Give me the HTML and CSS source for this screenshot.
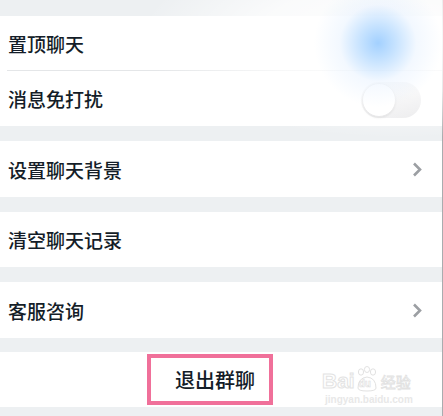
FILE: index.html
```html
<!DOCTYPE html>
<html lang="zh-CN">
<head>
<meta charset="utf-8">
<title>聊天设置</title>
<link rel="stylesheet" href="styles.css">
</head>
<body>
<div class="page">
  <section class="group">
    <div class="row row-54">置顶聊天</div>
    <div class="divider"></div>
    <div class="row row-55">消息免打扰
      <span class="switch"><span class="knob"></span></span>
    </div>
  </section>
  <section class="group">
    <div class="row row-56">设置聊天背景
      <svg class="chev" width="10" height="15" viewBox="0 0 10 15"><polyline points="2,1.5 8,7.5 2,13.5" fill="none" stroke="#9c9fa3" stroke-width="2.6"/></svg>
    </div>
  </section>
  <section class="group">
    <div class="row row-55">清空聊天记录</div>
  </section>
  <section class="group">
    <div class="row row-56">客服咨询
      <svg class="chev" width="10" height="15" viewBox="0 0 10 15"><polyline points="2,1.5 8,7.5 2,13.5" fill="none" stroke="#9c9fa3" stroke-width="2.6"/></svg>
    </div>
  </section>
  <section class="group group-last">
    <div class="row row-55 row-exit">
      <span class="exit-box">退出群聊</span>
    </div>
  </section>

  <div class="fog"></div>

  <div class="wm">
    <div class="wm-top">
      <span class="wm-bai">Bai</span>
      <svg class="wm-paw" width="22" height="26" viewBox="0 0 22 26">
        <ellipse cx="5" cy="6" rx="2.6" ry="3.2" fill="none" stroke="#e2e2e2" stroke-width="1"/>
        <ellipse cx="11" cy="3.5" rx="2.6" ry="3" fill="none" stroke="#e2e2e2" stroke-width="1"/>
        <ellipse cx="17" cy="6" rx="2.6" ry="3.2" fill="none" stroke="#e2e2e2" stroke-width="1"/>
        <path d="M2 22 Q2 12 11 11 Q20 12 20 22 Q20 25 11 25 Q2 25 2 22 Z" fill="none" stroke="#e2e2e2" stroke-width="1"/>
      </svg>
      <span class="wm-du">du</span>
      <span class="wm-jy">经验</span>
    </div>
    <div class="wm-url">jingyan.baidu.com</div>
  </div>
</div>
</body>
</html>
```

FILE: styles.css
```css
html, body {
  margin: 0;
  padding: 0;
}

body {
  background: #edf0f2;
  font-family: "Noto Sans CJK SC", "Noto Sans", sans-serif;
}

.page {
  position: relative;
  width: 443px;
  height: 416px;
  box-sizing: border-box;
  padding-top: 16px;
  display: flex;
  flex-direction: column;
  gap: 15px;
  overflow: hidden;
  box-shadow: inset -1px 0 0 #a9acaf, inset -3px 0 0 #eceef0;
}

.group {
  background: #fff;
  margin-right: 1px;
}

.group-last {
  margin-top: -1px;
}

.row {
  display: flex;
  align-items: center;
  padding: 0 20px 0 8px;
  font-size: 19px;
  font-weight: 500;
  color: #141d28;
  letter-spacing: 0;
}

.row-54 { height: 54px; }
.row-55 { height: 55px; }
.row-56 { height: 56px; }

.divider {
  height: 1px;
  margin-left: 7px;
  background: #e4e6e8;
}

.switch {
  margin-left: auto;
  margin-right: 1px;
  margin-top: 3px;
  width: 60px;
  height: 36px;
  border-radius: 18px;
  background: linear-gradient(90deg, #efeff0, #e4e4e6);
  box-sizing: border-box;
  padding: 1px;
  display: flex;
}

.knob {
  width: 32px;
  height: 32px;
  border-radius: 50%;
  background: #fff;
  border: 1px solid #dcdcde;
  box-shadow: 0 1px 2px rgba(0, 0, 0, 0.1);
}

.chev {
  margin-left: auto;
}

.row-exit {
  padding-left: 147px;
}

.exit-box {
  box-sizing: border-box;
  width: 126px;
  height: 51px;
  border: 4px solid #f0709a;
  padding-left: 24px;
  display: flex;
  align-items: center;
  font-size: 20px;
  color: #141d28;
}

.fog {
  position: absolute;
  inset: 0;
  pointer-events: none;
  background:
    radial-gradient(circle 64px at 378px 43px, rgba(150, 202, 255, 0.88) 0%, rgba(165, 210, 255, 0.62) 28%, rgba(215, 233, 255, 0.3) 60%, rgba(255, 255, 255, 0) 100%),
    radial-gradient(ellipse 260px 100px at 400px 38px, rgba(255, 255, 255, 0.97) 0%, rgba(255, 255, 255, 0.72) 55%, rgba(255, 255, 255, 0) 100%);
}

.wm {
  position: absolute;
  left: 322px;
  top: 362px;
  pointer-events: none;
  font-family: "Liberation Sans", Arial, sans-serif;
}

.wm-top {
  display: flex;
  align-items: flex-end;
  height: 30px;
}

.wm-bai {
  font-size: 21px;
  font-weight: bold;
  line-height: 22px;
  color: transparent;
  -webkit-text-stroke: 1px #e3e3e3;
}

.wm-paw {
  margin-left: 1px;
}

.wm-du {
  position: relative;
  margin-left: -19px;
  width: 16px;
  font-size: 10px;
  font-weight: bold;
  line-height: 16px;
  color: transparent;
  -webkit-text-stroke: 0.6px #dedede;
}

.wm-jy {
  margin-left: 6px;
  font-family: "Noto Sans CJK SC", sans-serif;
  font-size: 15px;
  line-height: 20px;
  color: transparent;
  -webkit-text-stroke: 0.8px #e2e2e2;
}

.wm-url {
  margin-top: 2px;
  margin-left: 3px;
  font-size: 10px;
  line-height: 11px;
  color: #e8e8e8;
  font-weight: bold;
}
```
